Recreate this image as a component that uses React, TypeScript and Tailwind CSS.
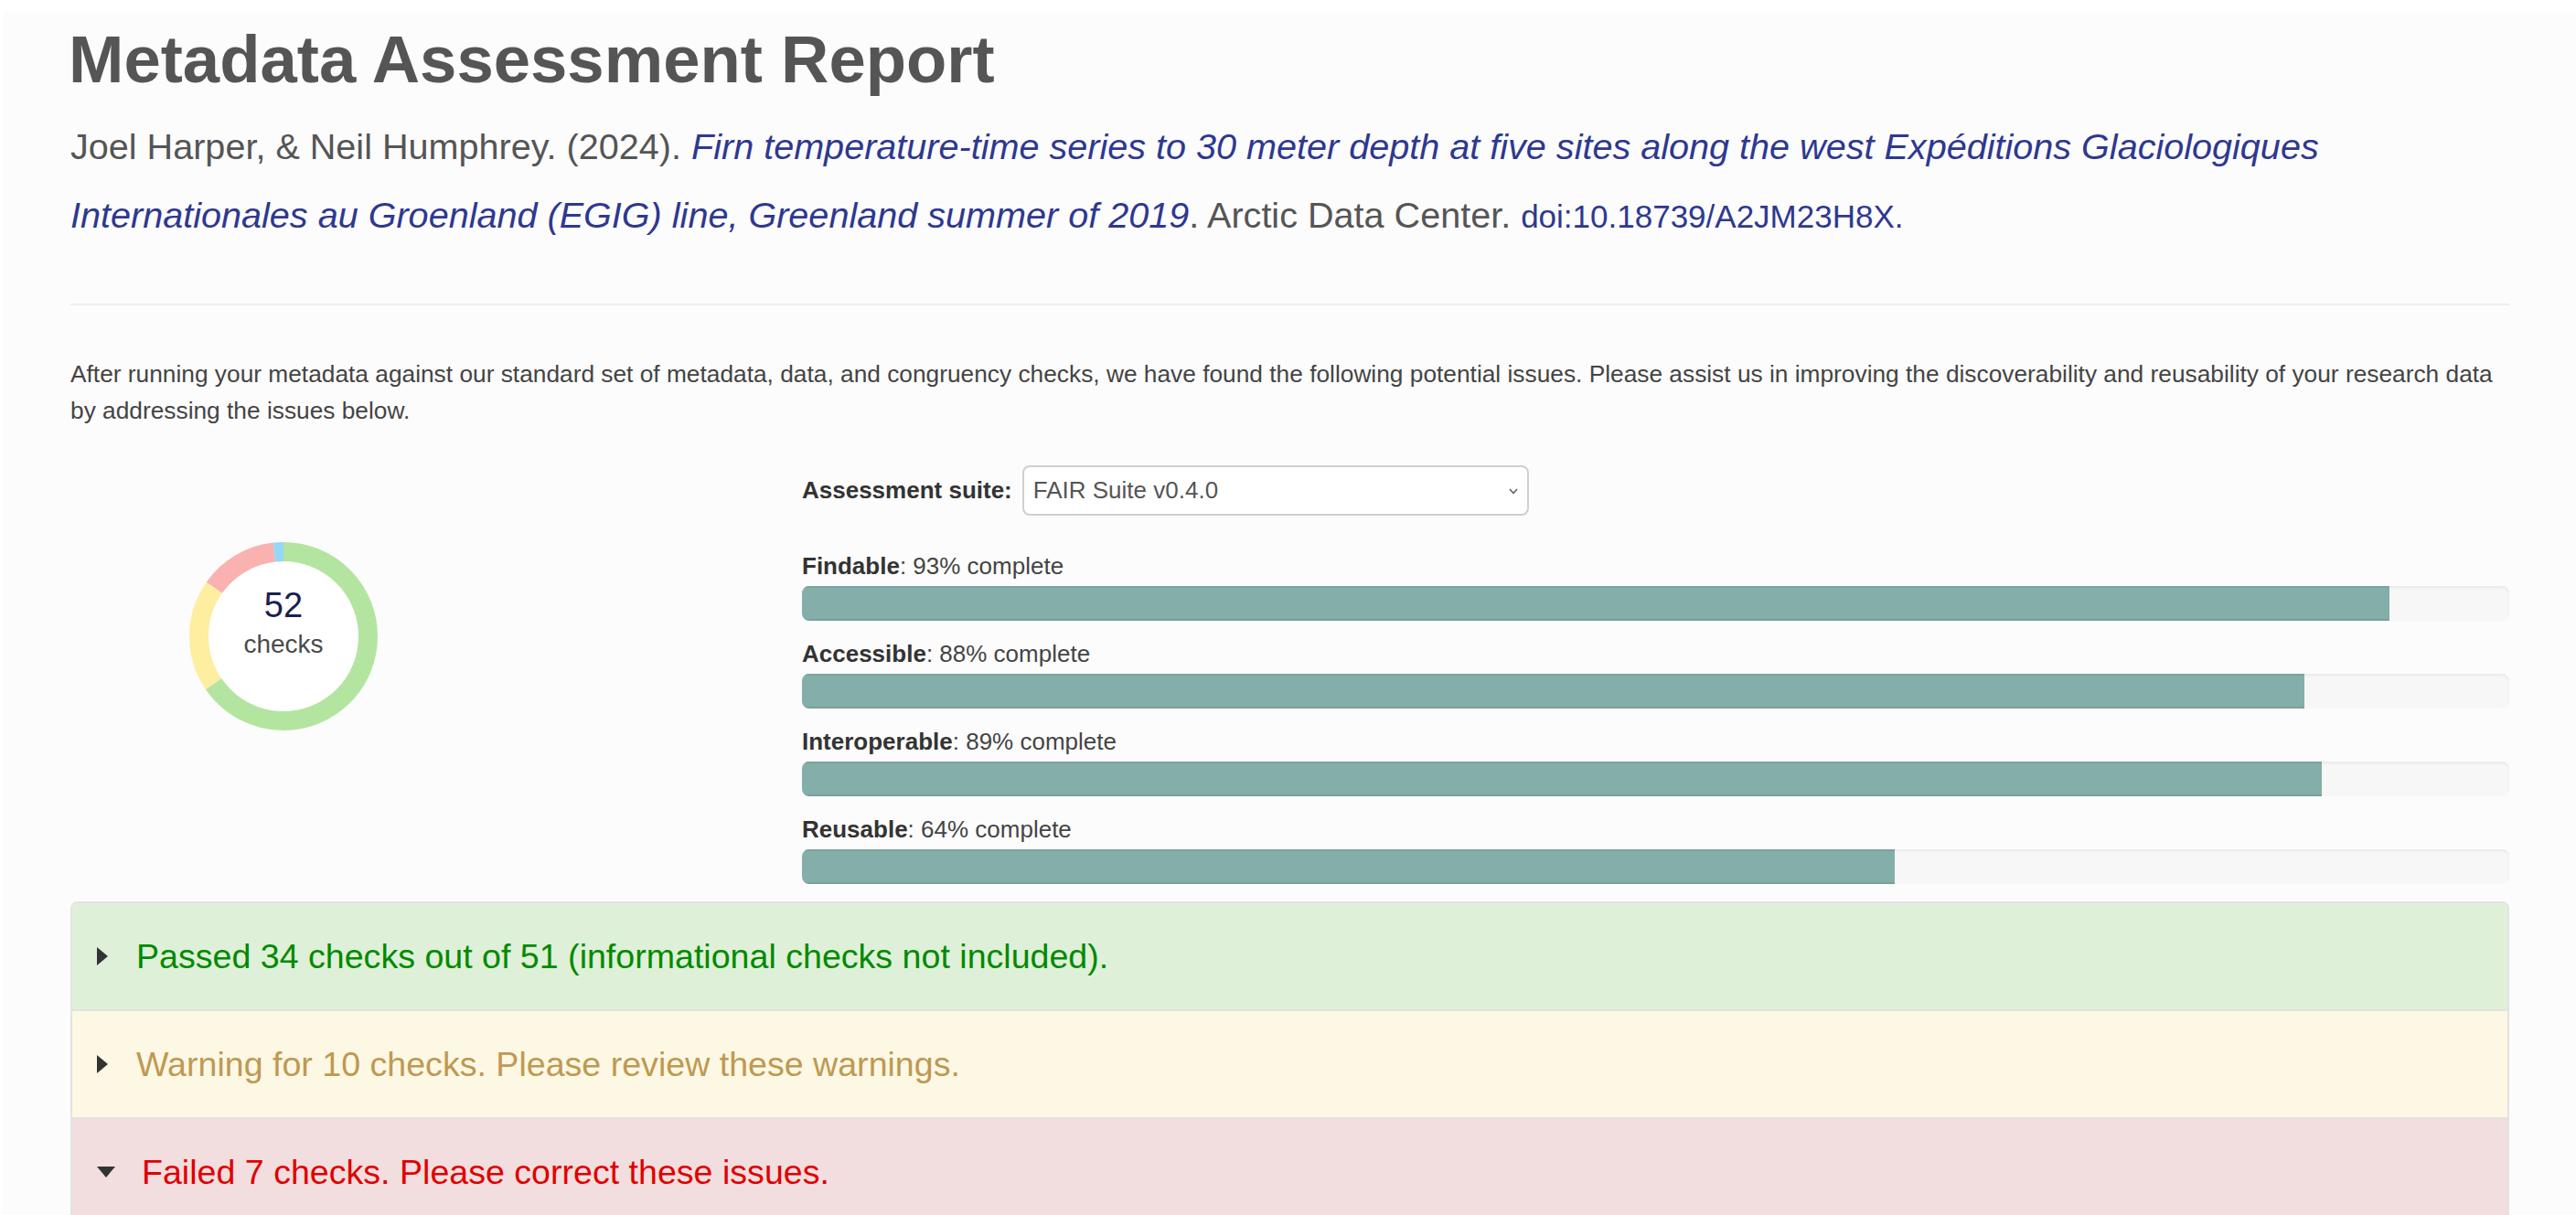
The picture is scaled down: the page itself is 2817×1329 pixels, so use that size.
import React from "react";

const bars = [
  { name: "Findable", pct: 93 },
  { name: "Accessible", pct: 88 },
  { name: "Interoperable", pct: 89 },
  { name: "Reusable", pct: 64 },
];

// chart slices, clockwise from the top
const slices = [
  { n: 34, color: "#b3e5a0" },
  { n: 10, color: "#fdeea0" },
  { n: 7, color: "#f9b2b0" },
  { n: 1, color: "#94d7f9" },
];

const Donut = () => {
  const r = 92.5;
  const c = 2 * Math.PI * r;
  const total = slices.reduce((s, x) => s + x.n, 0);
  let offset = 0;
  return (
    <div className="relative w-[206px] h-[206px]">
      <svg width="206" height="206" viewBox="0 0 206 206" className="-rotate-90">
        <circle cx="103" cy="103" r="82" fill="#ffffff" />
        {slices.map((s, i) => {
          const len = (s.n / total) * c;
          const el = (
            <circle
              key={i}
              cx="103"
              cy="103"
              r={r}
              fill="none"
              stroke={s.color}
              strokeWidth="21"
              strokeDasharray={`${len} ${c - len}`}
              strokeDashoffset={-offset}
            />
          );
          offset += len;
          return el;
        })}
      </svg>
      <div className="absolute inset-0 flex flex-col items-center justify-center pb-[29px]">
        <span className="text-[38px] leading-[40px] text-[#1c1f4f]">52</span>
        <span className="mt-[7px] text-[28px] leading-[32px] text-[#4a4a4a]">checks</span>
      </div>
    </div>
  );
};

const RightArrow = () => (
  <svg width="14" height="22" viewBox="0 0 14 22" className="shrink-0">
    <path d="M1 1 L13 11 L1 21 Z" fill="#333" />
  </svg>
);

const DownArrow = () => (
  <svg width="22" height="14" viewBox="0 0 22 14" className="shrink-0">
    <path d="M1 1 L21 1 L11 13 Z" fill="#333" />
  </svg>
);

const App = () => {
  return (
    <div className="min-h-screen bg-white pt-[14px] pl-[2px] font-['Liberation_Sans',Arial,sans-serif]">
      <div className="bg-[#fcfcfc] min-h-[1315px] pl-[75px] pr-[73px] pt-[11px]">
        {/* Heading */}
        <h1 className="text-[72.5px] leading-[80px] font-bold text-[#555] -ml-[2px]">
          Metadata Assessment Report
        </h1>

        {/* Citation */}
        <p className="mt-[18px] text-[39.6px] leading-[75px] text-[#555]">
          Joel Harper, &amp; Neil Humphrey. (2024).{" "}
          <span className="italic text-[#2e3890]">
            Firn temperature-time series to 30 meter depth at five sites along the west Expéditions Glaciologiques
            Internationales au Groenland (EGIG) line, Greenland summer of 2019
          </span>
          . Arctic Data Center.{" "}
          <span className="text-[35px] text-[#2e3890]">doi:10.18739/A2JM23H8X</span>
          <span className="text-[35px] text-[#2e3890]">.</span>
        </p>

        <hr className="mt-[58px] border-0 border-t-2 border-[#eeeeee]" />

        <p className="mt-[55px] text-[26.3px] leading-[40px] text-[#444]">
          After running your metadata against our standard set of metadata, data, and congruency checks, we have
          found the following potential issues. Please assist us in improving the discoverability and reusability of
          your research data by addressing the issues below.
        </p>

        {/* Chart + scores */}
        <div className="mt-[40px] flex">
          <div className="w-[800px] shrink-0 pl-[130px] pt-[84px]">
            <Donut />
          </div>

          <div className="flex-1">
            <div className="flex items-center h-[55px] gap-[11px]">
              <label className="text-[26px] font-bold text-[#333]">Assessment suite:</label>
              <div className="relative w-[554px] h-[55px]">
                <select
                  defaultValue="fair"
                  className="appearance-none w-full h-full bg-white border-2 border-[#cfcfcf] rounded-[8px] pl-[10px] text-[26px] text-[#555] font-['Liberation_Sans',Arial,sans-serif] outline-none"
                >
                  <option value="fair">FAIR Suite v0.4.0</option>
                </select>
                <svg
                  width="10"
                  height="7"
                  viewBox="0 0 10 7"
                  className="absolute right-[12px] top-[25px] pointer-events-none"
                >
                  <path d="M1 1 L5 5.5 L9 1" fill="none" stroke="#555" strokeWidth="1.4" />
                </svg>
              </div>
            </div>

            <div className="mt-[35px]">
              {bars.map((b, i) => (
                <div key={b.name} className={i < bars.length - 1 ? "mb-[16px]" : ""}>
                  <div className="h-[40px] leading-[40px] text-[26px] text-[#444]">
                    <span className="font-bold text-[#333]">{b.name}</span>: {b.pct}% complete
                  </div>
                  <div className="mt-[2px] h-[38px] rounded-[8px] bg-[#f7f7f7] overflow-hidden shadow-[inset_0_2px_3px_rgba(0,0,0,0.06)]">
                    <div
                      className="h-full bg-[#84aea9] shadow-[inset_0_-2px_0_rgba(0,0,0,0.08)] border-t-2 border-[#7ba39f]"
                      style={{ width: `${b.pct}%` }}
                    />
                  </div>
                </div>
              ))}
            </div>
          </div>
        </div>

        {/* Result groups */}
        <div className="mt-[19px] border-2 border-b-0 border-[#e2e2e2] rounded-t-[8px] overflow-hidden">
          <div className="h-[116px] bg-[#dff0d8] flex items-center pl-[26px]">
            <RightArrow />
            <span className="ml-[30px] text-[37.6px] text-[#008a00]">
              Passed 34 checks out of 51 (informational checks not included).
            </span>
          </div>
          <div className="h-[118px] border-t-2 border-[#e2e2e2] bg-[#fcf8e3] flex items-center pl-[26px]">
            <RightArrow />
            <span className="ml-[30px] text-[37.6px] text-[#c09853]">
              Warning for 10 checks. Please review these warnings.
            </span>
          </div>
          <div className="h-[118px] border-t-2 border-[#e2e2e2] bg-[#f2dede] flex items-center pl-[26px]">
            <DownArrow />
            <span className="ml-[28px] text-[37.6px] text-[#e00000]">
              Failed 7 checks. Please correct these issues.
            </span>
          </div>
        </div>
      </div>
    </div>
  );
};

export default App;
